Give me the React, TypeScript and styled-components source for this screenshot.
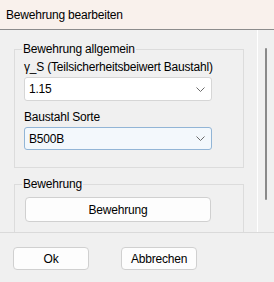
import React from "react";
import styled, { createGlobalStyle } from "styled-components";

const GlobalStyle = createGlobalStyle`
  html, body {
    margin: 0;
    padding: 0;
    background: #f0f0f0;
  }
  body {
    font-family: "Liberation Sans", Arial, sans-serif;
    font-size: 12px;
    letter-spacing: -0.2px;
    color: #000;
  }
`;

const Chevron: React.FC = () => (
  <svg width="9" height="5" viewBox="0 0 9 5">
    <polyline points="0.5,0.5 4.5,4.5 8.5,0.5" fill="none" stroke="#6a6a6a" strokeWidth="1" />
  </svg>
);

interface ComboProps {
  value: string;
  focused?: boolean;
}

const Combo: React.FC<ComboProps> = ({ value, focused }) => (
  <ComboBox $focused={focused} $height={focused ? 23 : 24}>
    <span>{value}</span>
    <Chevron />
  </ComboBox>
);

export default function App() {
  return (
    <>
      <GlobalStyle />
      <Window>
        <TitleBar>Bewehrung bearbeiten</TitleBar>
        <ScrollArea>
          <Content>
            <Group>
              <Legend>Bewehrung allgemein</Legend>
              <Label>γ_S (Teilsicherheitsbeiwert Baustahl)</Label>
              <Combo value="1.15" />
              <Label $gap={8}>Baustahl Sorte</Label>
              <Combo value="B500B" focused />
            </Group>
            <Group $last>
              <Legend>Bewehrung</Legend>
              <WideButton>Bewehrung</WideButton>
            </Group>
          </Content>
          <ScrollTrack>
            <Thumb />
          </ScrollTrack>
        </ScrollArea>
        <Footer>
          <DialogButton>Ok</DialogButton>
          <DialogButton>Abbrechen</DialogButton>
        </Footer>
      </Window>
    </>
  );
}

const Window = styled.div`
  width: 274px;
  height: 282px;
  display: flex;
  flex-direction: column;
  overflow: hidden;
`;

const TitleBar = styled.div`
  height: 30px;
  flex-shrink: 0;
  box-sizing: border-box;
  padding-left: 6px;
  display: flex;
  align-items: center;
  background: #f9f1ec;
  border-bottom: 1px solid #8c8c8c;
`;

const ScrollArea = styled.div`
  height: 202px;
  flex-shrink: 0;
  display: flex;
  overflow: hidden;
`;

const Content = styled.div`
  width: 258px;
  flex-shrink: 0;
  box-sizing: border-box;
  padding: 12px 13px 0 14px;
  display: flex;
  flex-direction: column;
  gap: 9px;
  border-right: 1px solid #ffffff;
  white-space: nowrap;
`;

const Group = styled.fieldset<{ $last?: boolean }>`
  margin: 0;
  padding: 3px 31px ${(p) => (p.$last ? "20px" : "17px")} 9px;
  border: 1px solid #dcdcdc;
  display: flex;
  flex-direction: column;
  flex-shrink: 0;
  min-width: 0;
`;

const Legend = styled.legend`
  padding: 0 1px;
  margin-left: -2px;
  line-height: 14px;
`;

const Label = styled.div<{ $gap?: number }>`
  line-height: 16px;
  margin-top: ${(p) => p.$gap ?? 0}px;
  margin-bottom: 2px;
`;

const ComboBox = styled.div<{ $focused?: boolean; $height: number }>`
  height: ${(p) => p.$height}px;
  box-sizing: border-box;
  display: flex;
  align-items: center;
  justify-content: space-between;
  padding: 0 6px 0 4px;
  background: ${(p) => (p.$focused ? "#f3f8fc" : "#ffffff")};
  border: 1px solid ${(p) => (p.$focused ? "#92b5d6" : "#d6d6d6")};
  border-radius: 3px;
`;

const WideButton = styled.div`
  margin: 3px 1px 0;
  height: 25px;
  flex-shrink: 0;
  box-sizing: border-box;
  display: flex;
  align-items: center;
  justify-content: center;
  background: #fdfdfd;
  border: 1px solid #d0d0d0;
  border-radius: 4px;
`;

const ScrollTrack = styled.div`
  flex: 1;
  padding: 18px 0 0 7px;
`;

const Thumb = styled.div`
  width: 2px;
  height: 152px;
  background: #8a8a8a;
  border-radius: 1px;
`;

const Footer = styled.div`
  flex: 1;
  border-top: 1px solid #dadada;
  padding: 14px 0 0 13px;
  display: flex;
  gap: 32px;
  align-items: flex-start;
`;

const DialogButton = styled.div`
  width: 76px;
  height: 23px;
  box-sizing: border-box;
  display: flex;
  align-items: center;
  justify-content: center;
  background: #fdfdfd;
  border: 1px solid #d0d0d0;
  border-radius: 4px;
`;
